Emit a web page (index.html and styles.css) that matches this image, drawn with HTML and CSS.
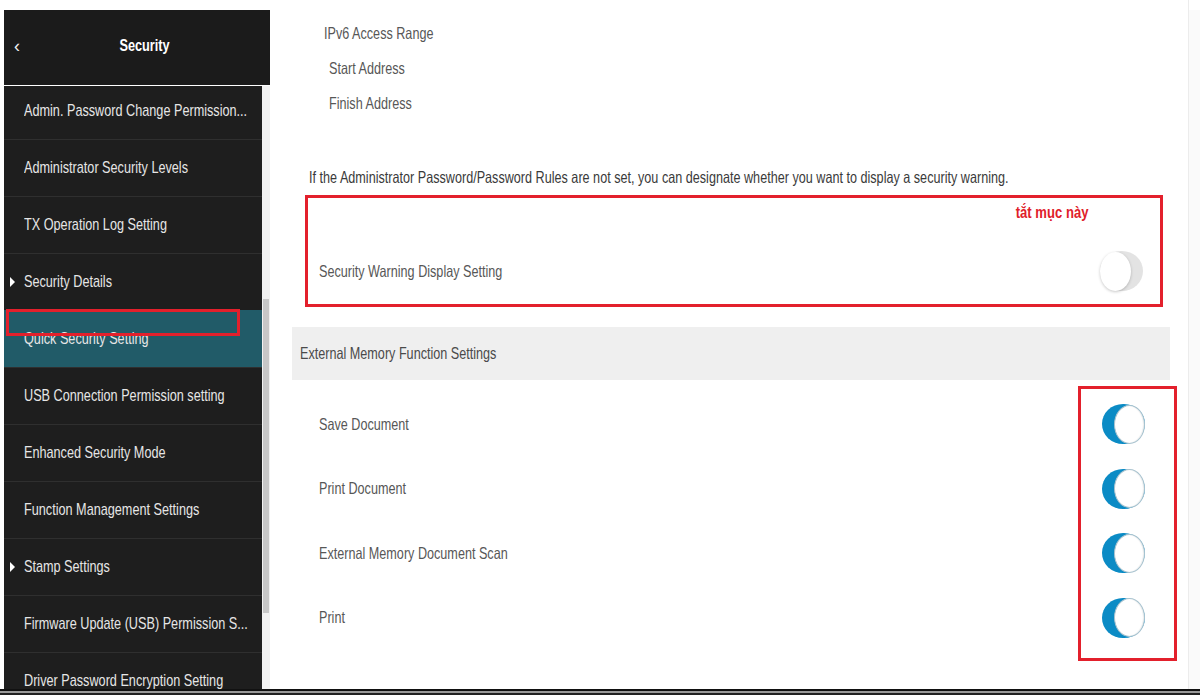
FILE: index.html
```html
<!DOCTYPE html>
<html lang="en">
<head>
<meta charset="utf-8">
<title>Security</title>
<link rel="stylesheet" href="styles.css">
</head>
<body>
<div class="screen">
  <aside class="sidebar">
    <div class="side-head">
      <span class="back">‹</span>
      <span class="title"><span class="t tc">Security</span></span>
    </div>
    <div class="side-body">
      <div class="side-list">
        <div class="item"><span class="t ts">Admin. Password Change Permission...</span></div>
        <div class="item"><span class="t ts">Administrator Security Levels</span></div>
        <div class="item"><span class="t ts">TX Operation Log Setting</span></div>
        <div class="item has-sub"><span class="tri"></span><span class="t ts">Security Details</span></div>
        <div class="item active"><span class="t ts">Quick Security Setting</span></div>
        <div class="item"><span class="t ts">USB Connection Permission setting</span></div>
        <div class="item"><span class="t ts">Enhanced Security Mode</span></div>
        <div class="item"><span class="t ts">Function Management Settings</span></div>
        <div class="item has-sub"><span class="tri"></span><span class="t ts">Stamp Settings</span></div>
        <div class="item"><span class="t ts">Firmware Update (USB) Permission S...</span></div>
        <div class="item"><span class="t ts">Driver Password Encryption Setting</span></div>
      </div>
      <div class="scroll"><div class="thumb"></div></div>
    </div>
    <div class="annot side-annot"></div>
  </aside>

  <main class="panel">
    <div class="ipv6">
      <div class="line"><span class="t">IPv6 Access Range</span></div>
      <div class="line sub"><span class="t">Start Address</span></div>
      <div class="line sub"><span class="t">Finish Address</span></div>
    </div>
    <p class="desc"><span class="t">If the Administrator Password/Password Rules are not set, you can designate whether you want to display a security warning.</span></p>
    <div class="warn-box">
      <div class="note"><span class="t tr">tắt mục này</span></div>
      <div class="row-in">
        <span class="t">Security Warning Display Setting</span>
        <span class="toggle off"><span class="knob"></span></span>
      </div>
    </div>
    <div class="band"><span class="t">External Memory Function Settings</span></div>
    <div class="rows">
      <div class="row"><span class="t">Save Document</span><span class="toggle on"><span class="knob"></span></span></div>
      <div class="row"><span class="t">Print Document</span><span class="toggle on"><span class="knob"></span></span></div>
      <div class="row"><span class="t">External Memory Document Scan</span><span class="toggle on"><span class="knob"></span></span></div>
      <div class="row"><span class="t">Print</span><span class="toggle on"><span class="knob"></span></span></div>
    </div>
    <div class="annot toggles-annot"></div>
  </main>
  <div class="rest"></div>
</div>
<div class="footer-line"></div>
</body>
</html>
```

FILE: styles.css
```css
* { box-sizing: border-box; }
html, body { margin: 0; padding: 0; }
body {
  width: 1200px;
  height: 695px;
  overflow: hidden;
  background: #fff;
  font-family: "Liberation Sans", Arial, sans-serif;
}
.screen {
  display: flex;
  height: 689px;
}

/* condensed text (the capture is horizontally squeezed) */
.t {
  display: inline-block;
  white-space: nowrap;
  transform: scaleX(0.765);
  transform-origin: left center;
}
.t.ts { transform: scaleX(0.745); }
.t.tc { transform: scaleX(0.75); transform-origin: center center; }
.t.tr { transform: scaleX(0.77); transform-origin: right center; }

/* sidebar */
.sidebar {
  position: relative;
  width: 266px;
  margin: 10px 0 0 4px;
  display: flex;
  flex-direction: column;
}
.side-head {
  height: 75px;
  background: #1b1b1b;
  display: flex;
  align-items: center;
  padding: 0 7px 0 10px;
  color: #fff;
  position: relative;
  z-index: 1;
}
.back {
  font-size: 18px;
  width: 13px;
  line-height: 1;
  margin-top: -4px;
  color: #f0f0f0;
}
.title {
  flex: 1;
  text-align: center;
  font-size: 17px;
  font-weight: bold;
  margin-top: -3px;
}
.side-body {
  flex: 1;
  display: flex;
  overflow: hidden;
  margin-top: 1px;
}
.side-list {
  width: 258px;
  background: #1e1e1e;
  margin-top: -4px;
}
.item {
  height: 57px;
  display: flex;
  align-items: center;
  padding-left: 20px;
  color: #e6e6e6;
  font-size: 17px;
  border-top: 1px solid #2f2f2f;
  white-space: nowrap;
  position: relative;
}
.item.has-sub .tri {
  position: absolute;
  left: 6px;
  top: 50%;
  margin-top: -5px;
  width: 0;
  height: 0;
  border-top: 5px solid transparent;
  border-bottom: 5px solid transparent;
  border-left: 5px solid #fff;
}
.item.active {
  background: #215b68;
  border-top-color: #215b68;
}
.scroll {
  width: 8px;
  background: #f1f1f1;
}
.thumb {
  margin: 213px 0 0 1px;
  width: 6px;
  height: 314px;
  background: #c7c7c7;
}
.annot {
  position: absolute;
  border: 3px solid #e3202c;
}
.side-annot {
  left: 2px;
  top: 299px;
  width: 234px;
  height: 27px;
}

/* main panel */
.panel {
  position: relative;
  width: 918px;
  padding: 16px 18px 0 22px;
  background: #fff;
  color: #575757;
  font-size: 16.5px;
  box-shadow: 1px 0 0 #ececec;
}
.rest {
  flex: 1;
  margin-top: 10px;
  background: #fafafa;
}
.ipv6 { padding-left: 32px; }
.line {
  height: 35px;
  display: flex;
  align-items: center;
}
.line.sub { padding-left: 5px; }
.desc {
  margin: 46px 0 0;
  padding-left: 17px;
  height: 20px;
  line-height: 20px;
  color: #3a3a3a;
  white-space: nowrap;
}
.warn-box {
  margin: 8px 7px 0 13px;
  height: 112px;
  border: 3px solid #e3202c;
  padding: 5px 17px 13px 11px;
}
.note {
  height: 20px;
  line-height: 20px;
  text-align: right;
  padding-right: 55px;
  color: #e0202a;
  font-weight: bold;
  font-size: 17px;
}
.row-in {
  margin-top: 28px;
  height: 40px;
  display: flex;
  align-items: center;
  justify-content: space-between;
}
.band {
  margin-top: 20px;
  height: 53px;
  background: #efefef;
  display: flex;
  align-items: center;
  padding-left: 8px;
  color: #4a4a4a;
}
.rows { padding-top: 12px; }
.row {
  height: 64.5px;
  display: flex;
  align-items: center;
  justify-content: space-between;
  padding: 0 25px 0 27px;
}

/* toggles */
.toggle {
  width: 43px;
  height: 40px;
  border-radius: 21px / 20px;
  display: flex;
  align-items: center;
  flex: none;
}
.knob {
  width: 31px;
  height: 39px;
  border-radius: 50%;
  background: #fff;
}
.toggle.off {
  background: #e3e3e3;
  justify-content: flex-start;
}
.toggle.off .knob {
  box-shadow: 0 1px 3px rgba(0, 0, 0, 0.22);
}
.toggle.on {
  background: #0b8bc5;
  justify-content: flex-end;
}
.toggle.on .knob {
  border: 1px solid #a9c3cf;
  box-shadow: inset -1px 0 1px rgba(0, 0, 0, 0.08);
}
.toggles-annot {
  left: 808px;
  top: 386px;
  width: 99px;
  height: 275px;
}

.footer-line {
  height: 6px;
  border-top: 2px solid #111;
  border-bottom: 2px solid #222;
  background: #9a9a9a;
}
```
